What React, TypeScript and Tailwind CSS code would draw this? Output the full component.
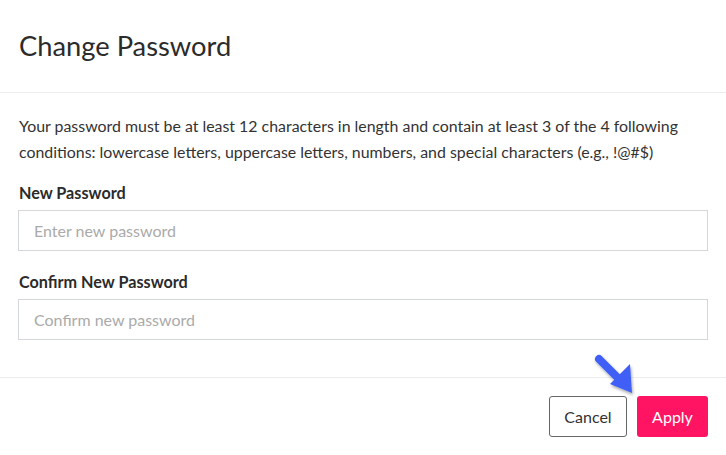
import React from "react";

export default function App() {
  return (
    <div className="w-[726px] h-[455px] bg-white text-[#333] overflow-hidden" style={{ fontFamily: "Lato, 'Liberation Sans', sans-serif" }}>
      <div className="h-[93px] border-b border-[#ececec] px-[19px] flex items-center">
        <h1 className="text-[27.3px] text-[#2b2b2b] leading-none pb-[1px]">Change Password</h1>
      </div>
      <div className="px-[18px] pt-[20px] pb-[37px] border-b border-[#ececec]">
        <p className="text-[15.9px] leading-[26px] text-[#333] pl-[1px]">
          Your password must be at least 12 characters in length and contain at least 3 of the 4 following conditions: lowercase letters, uppercase letters, numbers, and special characters (e.g., !@#$)
        </p>
        <label className="block mt-[17px] text-[16.2px] font-bold text-[#2b2b2b] leading-[22px] pl-[1px]">New Password</label>
        <input
          className="mt-[6px] w-[690px] h-[41px] border border-[#d3d6db] px-[15px] text-[16px] placeholder-[#aaa] outline-none"
          placeholder="Enter new password"
          type="password"
        />
        <label className="block mt-[20px] text-[16.2px] font-bold text-[#2b2b2b] leading-[22px] pl-[1px]">Confirm New Password</label>
        <input
          className="mt-[6px] w-[690px] h-[41px] border border-[#d3d6db] px-[15px] text-[16px] placeholder-[#aaa] outline-none"
          placeholder="Confirm new password"
          type="password"
        />
      </div>
      <div className="flex justify-end gap-[10px] pr-[18px] pt-[18px] relative">
        <button className="w-[78px] h-[41px] border border-[#666] rounded-[3px] text-[16px] text-[#333] bg-white">Cancel</button>
        <button className="w-[71px] h-[41px] rounded-[3px] text-[16px] text-white bg-[#ff1463]">Apply</button>
        <svg className="absolute left-[590px] top-[-26px]" width="48" height="46" viewBox="0 0 48 46">
          <defs>
            <filter id="sh" x="-30%" y="-30%" width="160%" height="160%">
              <feDropShadow dx="1" dy="2" stdDeviation="1.5" floodColor="#000" floodOpacity="0.35" />
            </filter>
          </defs>
          <g filter="url(#sh)">
            <line x1="9" y1="7" x2="28" y2="26" stroke="#3f5ef7" strokeWidth="8" strokeLinecap="round" />
            <polygon points="20,32 40,12 42,41" fill="#3f5ef7" />
          </g>
        </svg>
      </div>
    </div>
  );
}
